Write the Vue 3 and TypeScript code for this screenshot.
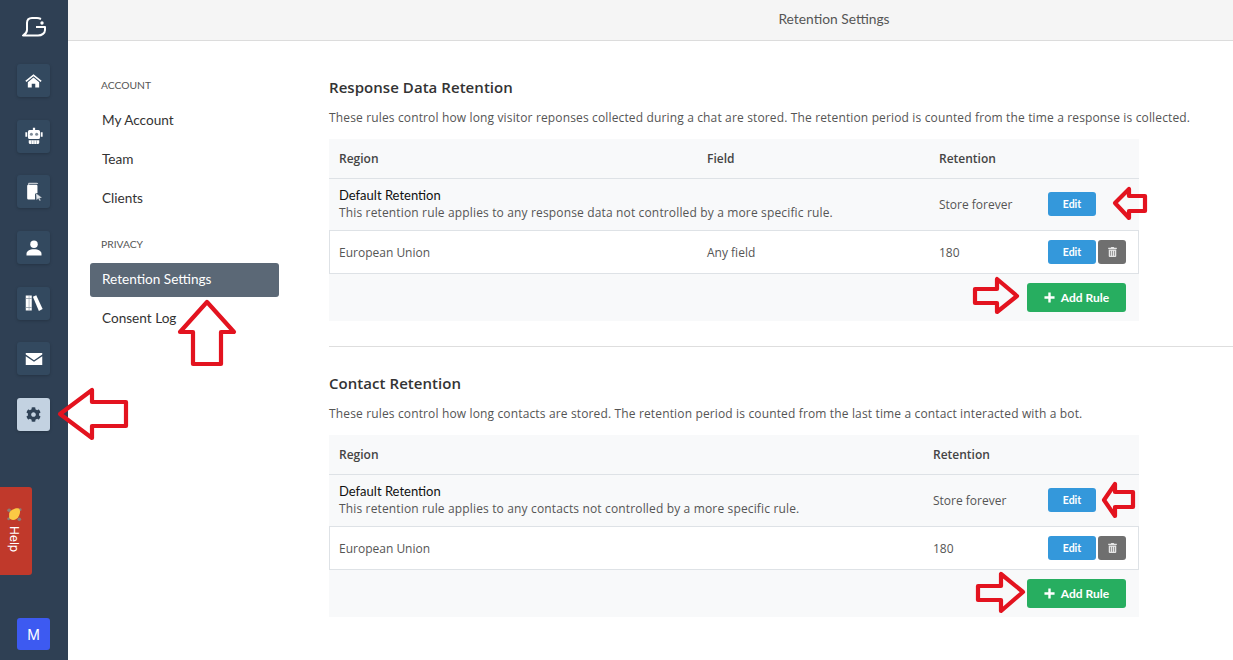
<script setup lang="ts">
interface Section {
  title: string
  desc: string
  hasField: boolean
  subject: string
}
const sections: Section[] = [
  {
    title: 'Response Data Retention',
    desc: 'These rules control how long visitor reponses collected during a chat are stored. The retention period is counted from the time a response is collected.',
    hasField: true,
    subject: 'response data',
  },
  {
    title: 'Contact Retention',
    desc: 'These rules control how long contacts are stored. The retention period is counted from the last time a contact interacted with a bot.',
    hasField: false,
    subject: 'contacts',
  },
]
const arrows: string[] = [
  '60,414 92,390 92,402 126,402 126,426 92,426 92,438',
  '207,302 234,332 221,332 221,364 193,364 193,332 180,332',
  '1115,203 1129,189 1129,196 1145,196 1145,211 1129,211 1129,218',
  '1017,296 997,279 997,289 975,289 975,303 997,303 997,312',
  '1104,500 1115,484 1115,492 1133,492 1133,507 1115,507 1115,516',
  '1023,592 1001,574 1001,586 978,586 978,600 1001,600 1001,611',
]
</script>

<template>
  <div class="page">
    <aside class="rail">
      <svg class="logo" viewBox="0 0 24 20" width="24" height="20" fill="none" stroke="#fff" stroke-width="2">
        <path d="M19 2C17.500 1.300 16 1 15 1H10C7 1 5 3 5 6V13C5 15 3.500 17 1 18.500H16C20 18.500 23 16 23 13V10H14" stroke-linejoin="round" />
        <circle cx="20" cy="6" r="1.700" fill="#fff" stroke="none" />
      </svg>
      <nav class="rail-icons">
        <a class="rail-btn">
          <svg viewBox="0 0 24 24" width="17" height="17" fill="#fff"><path d="M12 3 0.500 12.500 2 14.200 12 6l10 8.200 1.500-1.700ZM12 7.800 4 14.300V22h5.500v-5.500h5V22H20v-7.700Z" /></svg>
        </a>
        <a class="rail-btn">
          <svg viewBox="0 0 24 24" width="18" height="18" fill="#fff">
            <path d="M10.500 1h3v3h-3ZM6 4h12a2 2 0 0 1 2 2v8a2 2 0 0 1-2 2H6a2 2 0 0 1-2-2V6a2 2 0 0 1 2-2ZM0.500 7H3v6H0.500ZM21 7h2.500v6H21ZM5 17.500h14V21a1.500 1.500 0 0 1-1.500 1.500h-11A1.500 1.500 0 0 1 5 21Z" />
            <circle cx="8.500" cy="9.500" r="2" fill="#7f8b97" /><circle cx="15.500" cy="9.500" r="2" fill="#7f8b97" />
            <path d="M8 17.500h.8v5H8ZM11.600 17.500h.8v5h-.8ZM15.200 17.500h.8v5h-.8Z" fill="#8693a0" />
          </svg>
        </a>
        <a class="rail-btn">
          <svg viewBox="0 0 24 24" width="19" height="19" fill="#fff">
            <path d="M6 1h10a2 2 0 0 1 2 1.500H7.500A2 2 0 0 0 5.500 4.500L5 3a2 2 0 0 1 1-2Z" opacity=".7" />
            <path d="M5.500 3.500h10a1.500 1.500 0 0 1 1.500 1.500v9l-3 1v7H5.500A1.500 1.500 0 0 1 4 20.500V5a1.500 1.500 0 0 1 1.500-1.500Z" />
            <path d="m15 14 8 6-3.200.5 1.600 3-1.800.5-1.500-3-2.600 2Z" fill="#dfe4e9" stroke="#2f4257" stroke-width=".5" />
          </svg>
        </a>
        <a class="rail-btn">
          <svg viewBox="0 0 24 24" width="18" height="18" fill="#fff"><circle cx="12" cy="7" r="5" /><path d="M12 13.500c-6 0-10 2.500-10 6V22h20v-2.500c0-3.500-4-6-10-6Z" /></svg>
        </a>
        <a class="rail-btn">
          <svg viewBox="0 0 24 24" width="18" height="18" fill="#fff">
            <path d="M1 2h8v20H1Z" />
            <path d="M1 5.500h8v1H1ZM1 17.500h8v1H1ZM5 2h.8v20H5Z" fill="#8693a0" />
            <path d="M10.500 3.500 15 1.500 23.500 20 18.500 22.500Z" />
          </svg>
        </a>
        <a class="rail-btn">
          <svg viewBox="0 0 24 24" width="18" height="18" fill="#fff"><path d="M1 4h22v2l-11 7.500L1 6ZM1 8.300l11 7.500 11-7.500V20H1Z" /></svg>
        </a>
        <a class="rail-btn rail-btn-active">
          <svg viewBox="0 0 512 512" width="15" height="15" fill="#2f4257"><path d="M487.400 315.700l-42.600-24.600c4.300-23.200 4.300-47 0-70.200l42.600-24.600c4.900-2.800 7.100-8.600 5.500-14-11.100-35.600-30-67.800-54.700-94.600-3.800-4.100-10-5.100-14.800-2.300L380.800 110c-17.900-15.400-38.500-27.300-60.800-35.100V25.800c0-5.600-3.900-10.500-9.400-11.700-36.700-8.200-74.300-7.800-109.200 0-5.500 1.200-9.400 6.100-9.400 11.700V75c-22.200 7.900-42.800 19.800-60.800 35.100L88.700 85.500c-4.900-2.800-11-1.900-14.800 2.300-24.700 26.700-43.600 58.900-54.700 94.600-1.700 5.400.6 11.200 5.500 14L67.300 221c-4.300 23.200-4.300 47 0 70.200l-42.600 24.600c-4.900 2.800-7.100 8.600-5.500 14 11.100 35.600 30 67.800 54.700 94.600 3.800 4.100 10 5.100 14.800 2.300l42.600-24.600c17.900 15.400 38.500 27.300 60.800 35.100v49.200c0 5.600 3.900 10.500 9.400 11.700 36.700 8.200 74.300 7.800 109.200 0 5.500-1.200 9.400-6.100 9.400-11.700v-49.200c22.200-7.900 42.800-19.800 60.800-35.100l42.600 24.600c4.900 2.800 11 1.900 14.800-2.300 24.700-26.700 43.600-58.900 54.700-94.600 1.500-5.500-.7-11.300-5.600-14.100zM256 336c-44.100 0-80-35.900-80-80s35.900-80 80-80 80 35.900 80 80-35.900 80-80 80z" /></svg>
        </a>
      </nav>
      <a class="avatar">M</a>
      <div class="help">
        <svg class="wave" viewBox="0 0 14 14" width="15" height="15">
          <circle cx="2" cy="3" r="1.700" fill="#8a7d78" /><circle cx="12.300" cy="2.500" r="1.300" fill="#8a7d78" />
          <circle cx="1.500" cy="11" r="1.300" fill="#8a7d78" /><circle cx="11.500" cy="11.500" r="1.700" fill="#8a7d78" />
          <path d="M2 6C3 3 8 0.500 11 1.500 13 3 12.500 8 9 11 6 13 3 12 2 10Z" fill="#fbc944" />
        </svg>
        <span class="help-text">Help</span>
      </div>
    </aside>

    <div class="main">
      <header class="topbar">Retention Settings</header>
      <div class="body">
        <nav class="side">
          <div class="side-label">ACCOUNT</div>
          <a class="side-item">My Account</a>
          <a class="side-item">Team</a>
          <a class="side-item">Clients</a>
          <div class="side-label side-label-2">PRIVACY</div>
          <a class="side-item side-item-low">Retention Settings</a>
          <a class="side-item side-item-low">Consent Log</a>
        </nav>
        <main class="content">
          <section v-for="s in sections" :key="s.title" class="section">
            <h2 class="title">{{ s.title }}</h2>
            <p class="desc">{{ s.desc }}</p>
            <div class="table" :class="{ 'has-field': s.hasField }">
              <div class="row head">
                <div class="c-region">Region</div>
                <div v-if="s.hasField" class="c-field">Field</div>
                <div class="c-ret">Retention</div>
                <div></div>
              </div>
              <div class="row default">
                <div class="c-default">
                  <div class="def-name">Default Retention</div>
                  <div class="def-note">This retention rule applies to any {{ s.subject }} not controlled by a more specific rule.</div>
                </div>
                <div class="c-ret">Store forever</div>
                <div class="c-actions"><button class="btn edit">Edit</button></div>
              </div>
              <div class="row rule">
                <div class="c-region">European Union</div>
                <div v-if="s.hasField" class="c-field">Any field</div>
                <div class="c-ret">180</div>
                <div class="c-actions">
                  <button class="btn edit">Edit</button>
                  <button class="btn trash" aria-label="Delete">
                    <svg viewBox="0 0 448 512" width="9" height="10" fill="#e6e6e6"><path d="M32 464a48 48 0 0 0 48 48h288a48 48 0 0 0 48-48V128H32Zm272-256a16 16 0 0 1 32 0v224a16 16 0 0 1-32 0Zm-96 0a16 16 0 0 1 32 0v224a16 16 0 0 1-32 0Zm-96 0a16 16 0 0 1 32 0v224a16 16 0 0 1-32 0ZM432 32H312l-9-19A24 24 0 0 0 281 0H167a24 24 0 0 0-21 13l-10 19H16A16 16 0 0 0 0 48v32a16 16 0 0 0 16 16h416a16 16 0 0 0 16-16V48a16 16 0 0 0-16-16Z" /></svg>
                  </button>
                </div>
              </div>
              <div class="foot">
                <button class="btn add">
                  <svg viewBox="0 0 12 12" width="11" height="11" fill="#fff"><path d="M4.700 0.500h2.600v4.200h4.200v2.600H7.300v4.200H4.700V7.300H0.500V4.700h4.200Z" /></svg>
                  Add Rule
                </button>
              </div>
            </div>
          </section>
        </main>
      </div>
    </div>

    <svg class="arrows" width="1233" height="660" viewBox="0 0 1233 660">
      <polygon v-for="p in arrows" :key="p" :points="p" fill="none" stroke="#e3131f" stroke-width="4.200" stroke-linejoin="round" />
    </svg>
  </div>
</template>

<style scoped>
.page {
  position: relative;
  display: flex;
  width: 1233px;
  height: 660px;
  overflow: hidden;
  background: #fff;
  font-family: "Lato", sans-serif;
  color: #333;
}
.rail {
  position: relative;
  flex: 0 0 68px;
  box-sizing: border-box;
  padding-right: 1px;
  display: flex;
  flex-direction: column;
  align-items: center;
  background: #2f4054;
}
.logo { margin-top: 17px; flex: none; }
.rail-icons {
  display: flex;
  flex-direction: column;
  gap: 22.700px;
  margin-top: 27px;
}
.rail-btn {
  display: flex;
  align-items: center;
  justify-content: center;
  width: 33px;
  height: 33px;
  border-radius: 3px;
  background: #33495f;
  box-shadow: 0 1px 3px rgba(0, 0, 0, 0.2);
}
.rail-btn-active { background: #c3d2e1; }
.avatar {
  display: flex;
  align-items: center;
  justify-content: center;
  width: 33px;
  height: 32px;
  margin-top: auto;
  margin-bottom: 10px;
  border-radius: 3px;
  background: #3d5af1;
  color: #fff;
  font-family: "Inter", sans-serif;
  font-size: 14px;
}
.help {
  position: absolute;
  left: 0;
  top: 487px;
  width: 32px;
  height: 88px;
  border-radius: 0 3px 3px 0;
  background: #c0392b;
  display: flex;
  flex-direction: column;
  align-items: center;
  padding: 20px 3px 0 0;
  box-sizing: border-box;
}
.wave { flex: none; }
.help-text {
  writing-mode: vertical-rl;
  color: #fff;
  font-size: 12px;
  font-family: "Inter", sans-serif;
  margin-top: 4px;
}
.main { flex: 1; display: flex; flex-direction: column; min-width: 0; }
.topbar {
  flex: 0 0 41px;
  box-sizing: border-box;
  background: #f5f5f5;
  border-bottom: 1px solid #dcdcdc;
  font-size: 13.800px;
  line-height: 38px;
  text-align: center;
  color: #555;
  padding-left: 367px;
}
.body { flex: 1; display: flex; min-height: 0; }
.side {
  flex: 0 0 261px;
  box-sizing: border-box;
  padding: 37px 50px 0 22px;
}
.side-label {
  height: 14px;
  line-height: 14px;
  padding-left: 11px;
  font-size: 10.300px;
  color: #555;
  margin-bottom: 11px;
}
.side-label-2 { margin-top: 22px; margin-bottom: 12px; }
.side-item {
  display: block;
  height: 34px;
  line-height: 34px;
  margin-bottom: 5px;
  padding-left: 12px;
  font-size: 13.600px;
  color: #333;
  border-radius: 3px;
}
.side-item-low { line-height: 32px; }
.side-item-active, .side-label-2 + .side-item { background: #5b6876; color: #fff; }
.content { flex: 1; min-width: 0; padding-top: 36px; }
.section {
  padding-bottom: 25px;
  margin-bottom: 26px;
  border-bottom: 1px solid #dedede;
}
.section:last-child { border-bottom: 0; }
.title {
  margin: 0 0 11px;
  height: 21px;
  font-family: "Open Sans", sans-serif;
  font-size: 15px;
  line-height: 20px;
  font-weight: 600;
  letter-spacing: 0.05px;
  color: #333;
}
.desc {
  margin: 0 0 12px;
  height: 18px;
  font-family: "Open Sans", sans-serif;
  font-size: 12px;
  line-height: 18px;
  letter-spacing: 0.145px;
  color: #555;
  white-space: nowrap;
}
.table { width: 810px; font-family: "Open Sans", sans-serif; font-size: 12px; color: #555; }
.row {
  display: grid;
  grid-template-columns: 604px 115px 1fr;
  align-items: center;
  box-sizing: border-box;
}
.table.has-field .row { grid-template-columns: 378px 232px 109px 1fr; }
.table.has-field .default { grid-template-columns: 610px 109px 1fr; }
.table.has-field .rule { grid-template-columns: 377px 232px 109px 1fr; }
.head {
  height: 40px;
  background: #f8f9fa;
  border-bottom: 1px solid #dee2e6;
  color: #444;
  font-weight: 600;
}
.c-region, .c-default { padding-left: 10px; }
.default { height: 51px; padding-bottom: 1px; background: #f8f9fa; }
.def-name { font-family: "Lato", sans-serif; font-size: 13px; color: #111; line-height: 18px; }
.def-note { line-height: 18px; letter-spacing: 0.15px; }
.rule {
  height: 44px;
  background: #fff;
  border: 1px solid #dee2e6;
  grid-template-columns: 603px 115px 1fr;
}
.rule .c-region { padding-left: 9px; }
.foot {
  display: flex;
  justify-content: flex-end;
  box-sizing: border-box;
  height: 47px;
  padding: 9px 13px 0 0;
  background: #f8f9fa;
}
.c-actions { display: flex; gap: 2px; }
.btn {
  display: inline-flex;
  align-items: center;
  justify-content: center;
  padding: 0;
  border: 0;
  border-radius: 3px;
  color: #fff;
  font-family: "Lato", sans-serif;
  font-weight: 700;
}
.edit { width: 48px; height: 24px; background: #3498db; font-size: 10.500px; }
.trash { width: 28px; height: 24px; background: #6f6f6f; }
.add { width: 99px; height: 29px; gap: 6px; background: #27ae60; font-size: 12px; }
.arrows { position: absolute; left: 0; top: 0; pointer-events: none; }
</style>
